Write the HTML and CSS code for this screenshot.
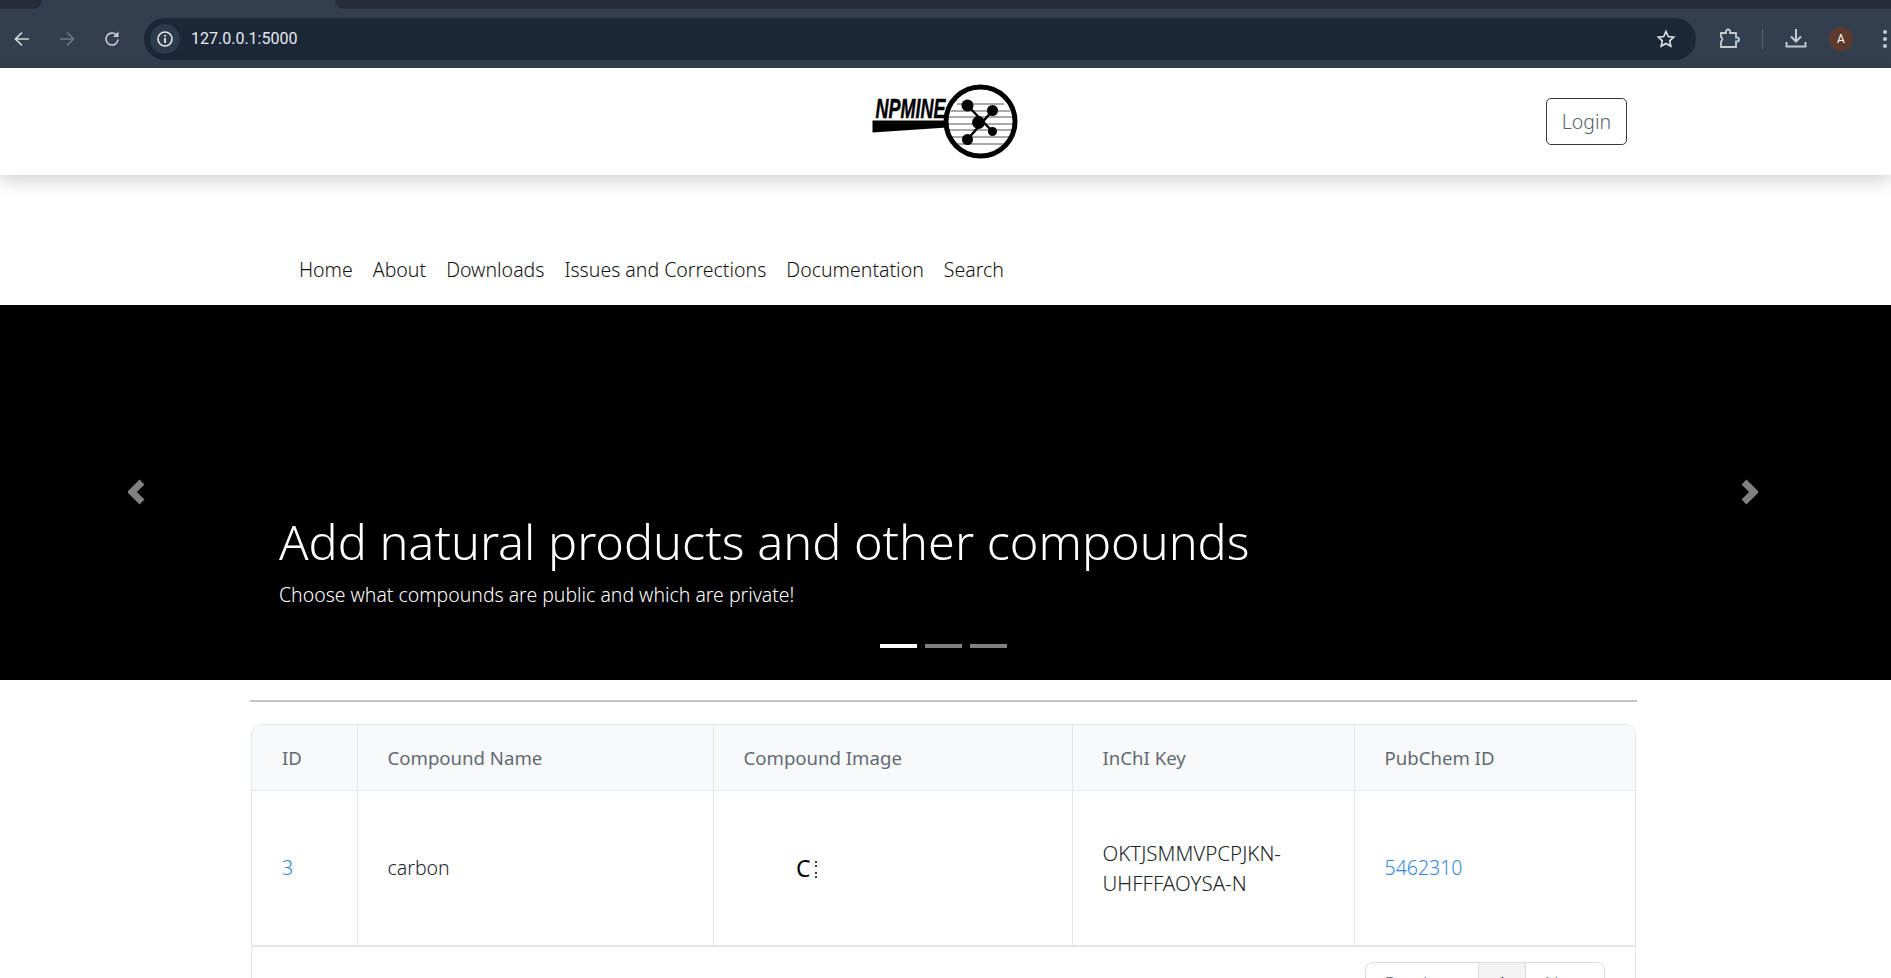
FILE: index.html
```html
<!DOCTYPE html>
<html lang="en">
  <head>
    <meta charset="utf-8" />
    <title>NPMINE</title>
    <link rel="stylesheet" href="styles.css">
  </head>

  <body>
    <!-- browser chrome -->
    <div class="tabstrip">
      <div class="tab-left"></div>
      <div class="tab-right"></div>
    </div>
    <div class="toolbar">
      <svg class="tool-icon" viewBox="0 0 18 18"><path d="M16 9H3M9 2.500L2.500 9 9 15.500" fill="none" stroke="#d3d8df" stroke-width="1.700"/></svg>
      <svg class="tool-icon" viewBox="0 0 18 18"><path d="M2 9h13M9 2.500L15.500 9 9 15.500" fill="none" stroke="#717680" stroke-width="1.700"/></svg>
      <svg class="tool-icon" viewBox="0 0 18 18"><path d="M15 9.500A6 6 0 1 1 13 4.500" fill="none" stroke="#c6ccd5" stroke-width="1.700"/><path d="M15.500 1.500v5.500h-5.500z" fill="#c6ccd5"/></svg>
      <div class="omnibox">
        <span class="site-info">
          <svg viewBox="0 0 18 18" width="18" height="18"><circle cx="9" cy="9" r="7" fill="none" stroke="#e6e8ec" stroke-width="1.600"/><path d="M9 8v5M9 5v1.800" stroke="#e6e8ec" stroke-width="1.800"/></svg>
        </span>
        <span class="url">127.0.0.1:5000</span>
        <svg class="star" viewBox="0 0 20 20" width="20" height="20"><path d="M10 2.500l2.300 5 5.400.6-4 3.700 1.100 5.400-4.800-2.700-4.800 2.700 1.100-5.400-4-3.700 5.400-.6z" fill="none" stroke="#dfe2e7" stroke-width="1.600"/></svg>
      </div>
      <div class="tool-end">
        <svg viewBox="0 0 22 22" width="22" height="22"><path d="M3 5h5V3.500a2 2 0 0 1 4 0V5h6v4.500h1a2 2 0 0 1 0 4h-1V19H3v-5.500a2.500 2.500 0 0 0 0-4.500z" fill="none" stroke="#c3cad4" stroke-width="1.800"/></svg>
        <span class="tool-sep"></span>
        <svg viewBox="0 0 22 22" width="22" height="22"><path d="M11 1v12M6 8.500l5 5 5-5" fill="none" stroke="#c3cad4" stroke-width="2"/><path d="M1.500 14v4.500h19V14" fill="none" stroke="#c3cad4" stroke-width="2"/></svg>
        <span class="avatar">A</span>
        <span class="dots"><i></i><i></i><i></i></span>
      </div>
    </div>

    <!-- site header -->
    <header class="site-header">
      <span></span>
      <svg class="logo" viewBox="2 0 150 80" width="150" height="80">
        <text x="6.500" y="34.500" class="logo-text" textLength="70" lengthAdjust="spacingAndGlyphs">NPMINE</text>
        <path d="M3.500 37.500L78 37.500 78 44.500 3.500 49.500z" fill="#000"/>
        <g stroke="#555" stroke-width="1">
          <path d="M88 21h47M82 28h59M80 34h63M78 41h67M80 47h63M82 54h59M88 61h47"/>
        </g>
        <circle cx="111.500" cy="38.500" r="34.500" fill="none" stroke="#000" stroke-width="5"/>
        <path d="M98.500 22.500L123.500 48.500M123.500 27.500L98.500 56.500" stroke="#000" stroke-width="2.500"/>
        <circle cx="98.500" cy="22.500" r="6"/>
        <circle cx="123.500" cy="27.500" r="5.500"/>
        <circle cx="123.500" cy="48.500" r="4.500"/>
        <circle cx="98.500" cy="56.500" r="5.500"/>
        <circle cx="109.500" cy="39.500" r="6.500"/>
      </svg>
      <div class="login-wrap"><a class="btn-login">Login</a></div>
    </header>

    <nav class="main-nav">
      <a>Home</a>
      <a>About</a>
      <a>Downloads</a>
      <a>Issues and Corrections</a>
      <a>Documentation</a>
      <a>Search</a>
    </nav>

    <section class="carousel">
      <svg class="arrow arrow-prev" viewBox="0 0 18 26" width="18" height="26"><path d="M14 3L4 13l10 10" fill="none" stroke="#808080" stroke-width="7"/></svg>
      <svg class="arrow arrow-next" viewBox="0 0 18 26" width="18" height="26"><path d="M4 3l10 10L4 23" fill="none" stroke="#808080" stroke-width="7"/></svg>
      <div class="caption">
        <h2>Add natural products and other compounds</h2>
        <p>Choose what compounds are public and which are private!</p>
      </div>
      <div class="indicators">
        <span class="active"></span>
        <span></span>
        <span></span>
      </div>
    </section>

    <main class="content">
      <hr class="rule" />
      <div class="table-card">
        <table>
          <colgroup>
            <col class="col-id" />
            <col class="col-name" />
            <col class="col-image" />
            <col class="col-key" />
            <col />
          </colgroup>
          <thead>
            <tr>
              <th>ID</th>
              <th>Compound Name</th>
              <th>Compound Image</th>
              <th>InChI Key</th>
              <th>PubChem ID</th>
            </tr>
          </thead>
          <tbody>
            <tr>
              <td><a>3</a></td>
              <td>carbon</td>
              <td class="cell-image">
                <svg class="structure" viewBox="0 0 24 22" width="24" height="22">
                  <text x="0" y="18" class="structure-text">C</text>
                  <circle cx="20" cy="3" r="1" /><circle cx="20" cy="7" r="1" />
                  <circle cx="20" cy="14" r="1" /><circle cx="20" cy="18" r="1" />
                </svg>
              </td>
              <td class="cell-key">OKTJSMMVPCPJKN-<br />UHFFFAOYSA-N</td>
              <td><a>5462310</a></td>
            </tr>
          </tbody>
        </table>
        <div class="table-footer">
          <span>Showing 1 to 1 of 1 <a>results</a></span>
          <div class="pager">
            <span class="page-prev">Previous</span>
            <span class="page-num">1</span>
            <span class="page-next">Next</span>
          </div>
        </div>
      </div>
    </main>
  </body>
</html>
```

FILE: styles.css
```css
html,
body {
  margin: 0;
  height: 100%;
  overflow: hidden;
}
body {
  background: #fff;
  color: #212529;
  font-family: "Noto Sans", sans-serif;
  font-size: 19.500px;
  font-weight: 300;
}
a {
  color: inherit;
  text-decoration: none;
}

/* browser chrome */
.tabstrip {
  display: flex;
  justify-content: space-between;
  height: 9px;
  background: #333f4e;
}
.tab-left {
  width: 42px;
  background: #272d38;
  border-bottom-right-radius: 9px;
}
.tab-right {
  width: 1556px;
  background: #272d38;
  border-bottom-left-radius: 9px;
}
.toolbar {
  display: flex;
  align-items: center;
  height: 59px;
  background: #333f4e;
  padding-left: 13px;
  box-sizing: border-box;
}
.tool-icon {
  width: 18px;
  height: 18px;
  margin-right: 27px;
}
.omnibox {
  display: flex;
  align-items: center;
  width: 1552px;
  height: 42px;
  margin-left: -4px;
  border-radius: 21px;
  background: #1c2738;
  box-sizing: border-box;
  padding: 0 20px 0 6px;
}
.site-info {
  display: flex;
  align-items: center;
  justify-content: center;
  width: 30px;
  height: 30px;
  border-radius: 50%;
  background: #2e3b4c;
  margin-right: 11px;
}
.url {
  flex: 1;
  color: #e6ebf2;
  font-family: Roboto, sans-serif;
  font-size: 16px;
  font-weight: 400;
}
.tool-end {
  display: flex;
  align-items: center;
  margin-left: 22px;
}
.tool-sep {
  width: 1px;
  height: 20px;
  background: #56606d;
  margin: 0 22px;
}
.avatar {
  display: flex;
  align-items: center;
  justify-content: center;
  width: 24px;
  height: 24px;
  margin-left: 22px;
  border-radius: 50%;
  background: #5e3a2c;
  color: #fff;
  font-family: Roboto, sans-serif;
  font-size: 12px;
  font-weight: 400;
}
.dots {
  display: flex;
  flex-direction: column;
  gap: 3px;
  margin-left: 30px;
}
.dots i {
  width: 4px;
  height: 4px;
  border-radius: 50%;
  background: #c3cad4;
}

/* site header */
.site-header {
  display: grid;
  grid-template-columns: 1fr auto 1fr;
  align-items: center;
  height: 107px;
  padding: 0 264px;
  background: #fff;
  box-shadow: 0 5px 18px rgba(0, 0, 0, 0.2);
  position: relative;
}
.logo {
  display: block;
  margin-top: 2px;
}
.logo-text {
  font-family: "Liberation Sans", sans-serif;
  font-size: 28px;
  font-weight: 700;
  font-style: italic;
  stroke: #000;
  stroke-width: 0.500px;
}
.login-wrap {
  display: flex;
  justify-content: flex-end;
}
.btn-login {
  display: flex;
  align-items: center;
  justify-content: center;
  width: 81px;
  height: 47px;
  box-sizing: border-box;
  border: 1px solid #343a40;
  border-radius: 5px;
  color: #5a6068;
}

.main-nav {
  display: flex;
  align-items: center;
  gap: 20px;
  height: 130px;
  padding: 58px 0 0 299px;
  box-sizing: border-box;
  color: #111;
}

/* carousel */
.carousel {
  position: relative;
  height: 375px;
  background: #000;
  color: #fff;
}
.arrow {
  position: absolute;
  top: 174px;
}
.arrow-prev {
  left: 128px;
}
.arrow-next {
  right: 133px;
}
.caption {
  position: absolute;
  left: 279px;
  top: 205px;
}
.caption h2 {
  margin: 0;
  font-size: 48.600px;
  font-weight: 300;
  line-height: 62px;
}
.caption p {
  margin: 8px 0 0;
  font-size: 19.450px;
  line-height: 30px;
}
.indicators {
  position: absolute;
  left: 880px;
  top: 339px;
  display: flex;
  gap: 8px;
}
.indicators span {
  width: 37px;
  height: 4px;
  background: #808080;
}
.indicators .active {
  background: #fff;
}

/* compounds table */
.content {
  width: 1387px;
  margin-left: 250px;
}
.rule {
  margin: 20px 0 22px;
  border: 0;
  height: 2px;
  background: #c4c4c8;
}
.table-card {
  width: 1385px;
  margin-left: 1px;
  box-sizing: border-box;
  border: 1px solid #e3e6ea;
  border-radius: 10px;
  overflow: hidden;
}
table {
  width: 100%;
  border-collapse: collapse;
  table-layout: fixed;
}
.col-id {
  width: 105px;
}
.col-name {
  width: 356px;
}
.col-image {
  width: 359px;
}
.col-key {
  width: 282px;
}
th,
td {
  padding: 0 30px;
  text-align: left;
  border-left: 1px solid #e3e6ea;
  line-height: 30px;
}
th:first-child,
td:first-child {
  border-left: 0;
}
th {
  height: 65px;
  background: #f8f9fa;
  color: #636a74;
  font-size: 18.600px;
  font-weight: 400;
  border-bottom: 1px solid #e3e6ea;
}
td {
  height: 155px;
  border-bottom: 2px solid #e3e6ea;
  box-sizing: border-box;
}
td a,
.table-footer a {
  color: #2f87dd;
}
.cell-key {
  font-size: 20.500px;
}
.cell-image {
  padding-left: 82px;
}
.structure {
  display: block;
  margin-top: 4px;
}
.structure-text {
  font-family: "Noto Sans", sans-serif;
  font-size: 23px;
  font-weight: 400;
}
.table-footer {
  display: flex;
  justify-content: space-between;
  padding: 15px 30px 0;
  height: 70px;
}
.table-footer > span {
  padding-top: 13px;
}
.pager {
  display: flex;
  height: 44px;
  border: 1px solid #d8dadd;
  border-radius: 8px;
  overflow: hidden;
}
.pager span {
  display: flex;
  align-items: center;
  justify-content: center;
  box-sizing: border-box;
  color: #6c757d;
}
.page-prev {
  width: 112px;
}
.page-num {
  width: 48px;
  background: #f3f3f3;
  border-left: 1px solid #d8dadd;
  border-right: 1px solid #d8dadd;
  color: #212529 !important;
}
.page-next {
  width: 78px;
}
```
